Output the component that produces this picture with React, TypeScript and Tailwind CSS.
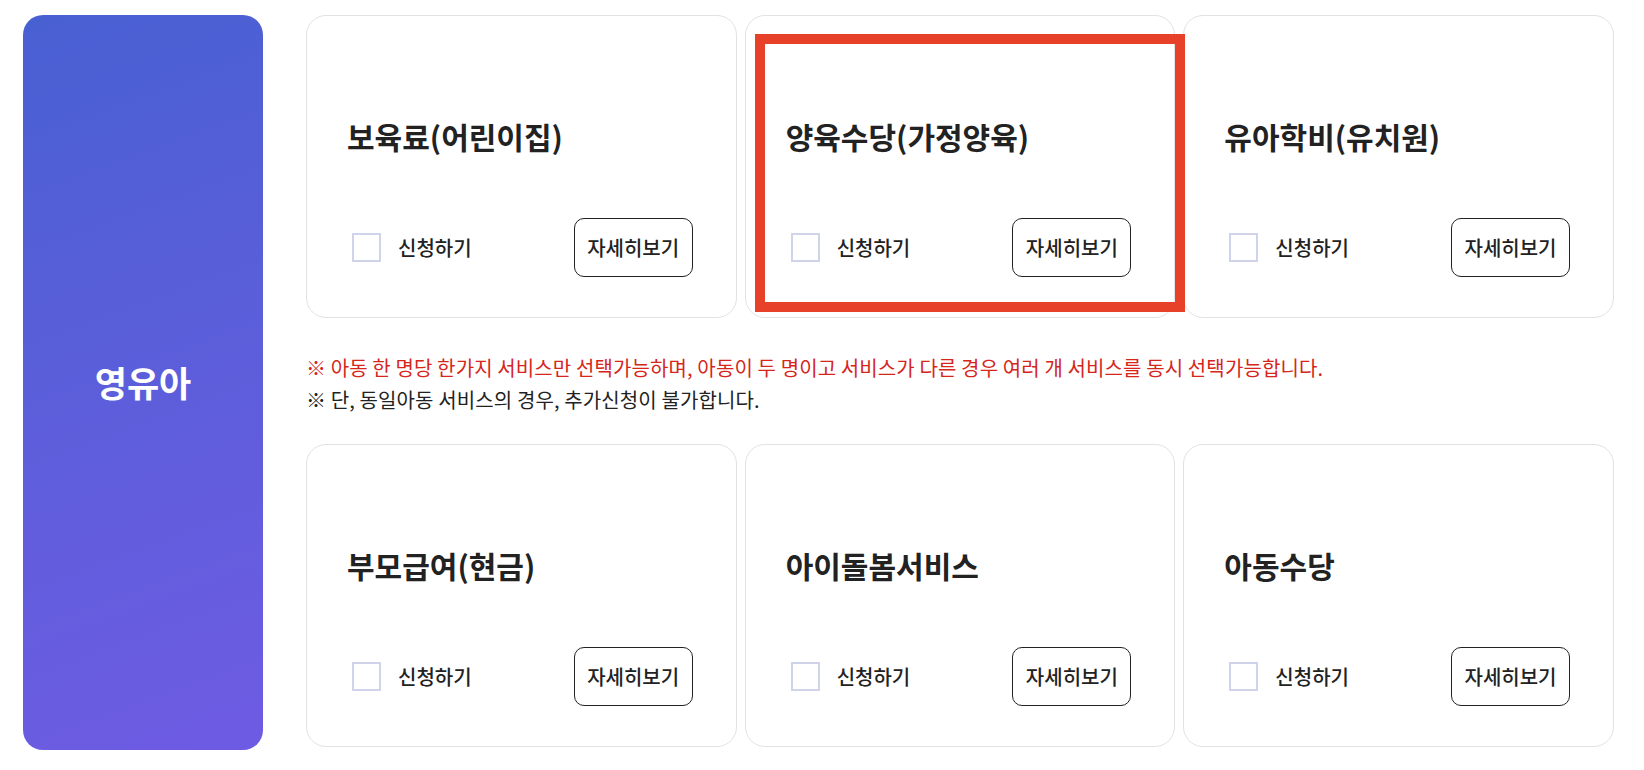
const services = [
  { title: "보육료(어린이집)" },
  { title: "양육수당(가정양육)", marked: true },
  { title: "유아학비(유치원)" },
];

const services2 = [{ title: "부모급여(현금)" }, { title: "아이돌봄서비스" }, { title: "아동수당" }];

function ServiceCard({ title, marked }: { title: string; marked?: boolean }) {
  return (
    <article className="relative flex h-[303px] flex-col rounded-[20px] border border-[#e2e2e6] bg-white pl-[40px] pr-[43px] pt-[100px]">
      <h3 className="text-[30px] font-bold leading-[40px] text-[#222]">{title}</h3>
      <div className="mt-[62px] flex items-center justify-between">
        <label className="ml-[5px] flex items-center gap-[17px]">
          <span className="block size-[29px] border-2 border-[#d0d4ea] bg-white" />
          <span className="text-[20px] font-medium text-[#222]">신청하기</span>
        </label>
        <button className="h-[59px] w-[119px] rounded-[10px] border border-[#222] text-[20px] font-medium text-[#222]">
          자세히보기
        </button>
      </div>
      {marked && <div className="absolute left-[9px] top-[18px] z-10 h-[278px] w-[430px] border-[10px] border-[#e8412a]" />}
    </article>
  );
}

export default function App() {
  return (
    <div className="flex min-h-[770px] gap-[43px] bg-white pl-[23px] pt-[15px] font-['Noto_Sans_CJK_KR','Noto_Sans',sans-serif]">
      <aside className="flex h-[735px] w-[240px] shrink-0 items-center justify-center rounded-[20px] bg-linear-160 from-[#4860d2] to-[#6e5be3]">
        <h2 className="text-[35px] font-bold text-white">영유아</h2>
      </aside>

      <section className="w-[1308px]">
        <div className="grid grid-cols-3 gap-x-[8px]">
          {services.map((s) => (
            <ServiceCard key={s.title} {...s} />
          ))}
        </div>

        <div className="pb-[28px] pt-[34px] text-[20px] leading-[32px] tracking-[0.12px]">
          <p className="text-[#d5261c]">※ 아동 한 명당 한가지 서비스만 선택가능하며, 아동이 두 명이고 서비스가 다른 경우 여러 개 서비스를 동시 선택가능합니다.</p>
          <p className="text-[#222]">※ 단, 동일아동 서비스의 경우, 추가신청이 불가합니다.</p>
        </div>

        <div className="grid grid-cols-3 gap-x-[8px]">
          {services2.map((s) => (
            <ServiceCard key={s.title} {...s} />
          ))}
        </div>
      </section>
    </div>
  );
}
